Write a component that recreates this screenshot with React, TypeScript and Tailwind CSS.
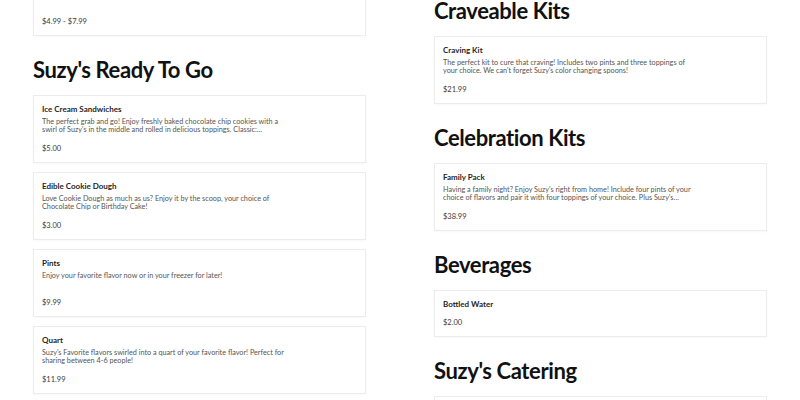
import React from "react";

type Item = { title: string; desc?: string; price: string };
type Section = { heading?: string; items: Item[] };

const left: Section[] = [
  {
    items: [
      {
        title: "Cups & Cones",
        desc: "Choose your favorite flavor served in a cup or a freshly made waffle cone.",
        price: "$4.99 - $7.99",
      },
    ],
  },
  {
    heading: "Suzy's Ready To Go",
    items: [
      {
        title: "Ice Cream Sandwiches",
        desc: "The perfect grab and go! Enjoy freshly baked chocolate chip cookies with a swirl of Suzy's in the middle and rolled in delicious toppings. Classic:…",
        price: "$5.00",
      },
      {
        title: "Edible Cookie Dough",
        desc: "Love Cookie Dough as much as us? Enjoy it by the scoop, your choice of Chocolate Chip or Birthday Cake!",
        price: "$3.00",
      },
      {
        title: "Pints",
        desc: "Enjoy your favorite flavor now or in your freezer for later!",
        price: "$9.99",
      },
      {
        title: "Quart",
        desc: "Suzy's Favorite flavors swirled into a quart of your favorite flavor! Perfect for sharing between 4-6 people!",
        price: "$11.99",
      },
    ],
  },
];

const right: Section[] = [
  {
    heading: "Craveable Kits",
    items: [
      {
        title: "Craving Kit",
        desc: "The perfect kit to cure that craving! Includes two pints and three toppings of your choice. We can't forget Suzy's color changing spoons!",
        price: "$21.99",
      },
    ],
  },
  {
    heading: "Celebration Kits",
    items: [
      {
        title: "Family Pack",
        desc: "Having a family night? Enjoy Suzy's right from home! Include four pints of your choice of flavors and pair it with four toppings of your choice. Plus Suzy's…",
        price: "$38.99",
      },
    ],
  },
  {
    heading: "Beverages",
    items: [{ title: "Bottled Water", price: "$2.00" }],
  },
  {
    heading: "Suzy's Catering",
    items: [
      {
        title: "Catering Package",
        desc: "Bring Suzy's to your next event with a full sundae bar for your guests.",
        price: "$150.00",
      },
    ],
  },
];

function Card({ item }: { item: Item }) {
  return (
    <div className="border border-[#ececec] bg-white pt-[8px] pb-[8px] pl-[8px] pr-[8px] shadow-[0_1px_2px_rgba(0,0,0,0.03)]">
      <div className="text-[8px] leading-[10px] font-bold text-[#1f1f1f]">{item.title}</div>
      {item.desc && (
        <div className="mt-[4px] h-[15px] w-[251px] overflow-hidden text-[7.25px] leading-[7.5px] text-[#555] line-clamp-2">
          {item.desc}
        </div>
      )}
      <div className={(item.desc ? "mt-[11px]" : "mt-[9px]") + " text-[7.5px] leading-[10px] text-[#3a3a3a]"}>
        {item.price}
      </div>
    </div>
  );
}

function Column({ sections, className }: { sections: Section[]; className: string }) {
  return (
    <div className={"flex flex-col " + className}>
      {sections.map((s, i) => (
        <div key={i} className={i > 0 ? "mt-[20px]" : ""}>
          {s.heading && (
            <h2 className="mb-[11px] text-[22px] leading-[28px] font-bold text-[#111] tracking-[-0.4px]">
              {s.heading}
            </h2>
          )}
          <div className="flex flex-col gap-[9px]">
            {s.items.map((it, j) => (
              <Card key={j} item={it} />
            ))}
          </div>
        </div>
      ))}
    </div>
  );
}

export default function App() {
  return (
    <div
      className="h-[400px] w-[800px] overflow-hidden bg-white"
      style={{ fontFamily: 'Lato, "Open Sans", sans-serif' }}
    >
      <div className="grid grid-cols-2 gap-x-[68px] px-[33px]">
        <Column sections={left} className="-mt-[32px]" />
        <Column sections={right} className="-mt-[3px]" />
      </div>
    </div>
  );
}
